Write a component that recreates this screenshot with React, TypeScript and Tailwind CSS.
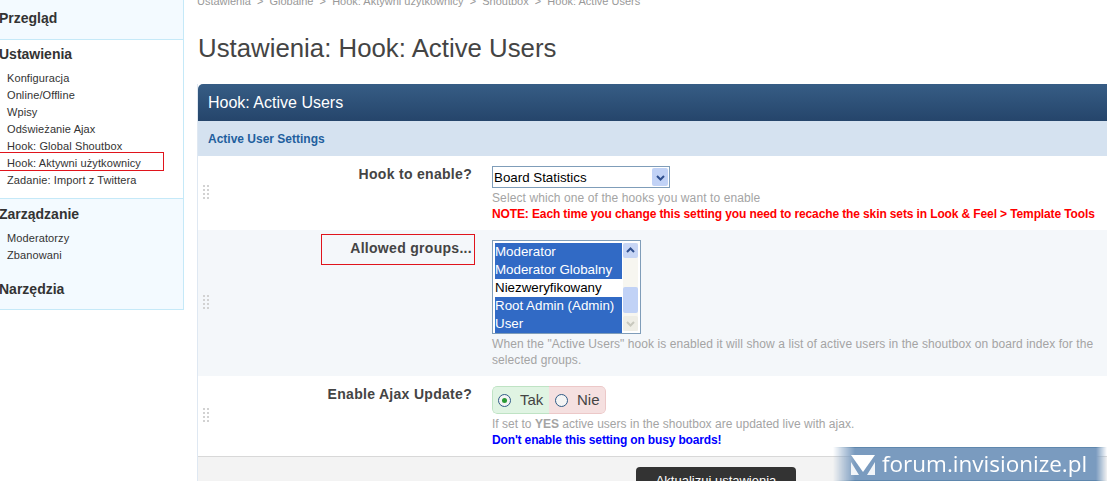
import React from 'react';

const sans = 'font-["Liberation_Sans",Arial,sans-serif]';

const DragHandle = () => (
    <svg width="6" height="14" viewBox="0 0 6 14" className="-mt-[2px] shrink-0" aria-hidden="true">
        {[0, 4, 8, 12].map((y) => (
            <g key={y} fill="#d2d2d2">
                <rect x="0" y={y} width="2" height="2" />
                <rect x="4" y={y} width="2" height="2" />
            </g>
        ))}
    </svg>
);

const NavItem: React.FC<{ label: string; marked?: boolean }> = ({ label, marked }) => (
    <li className="relative h-[17px] pl-[7px] text-[11px] leading-[17px] tracking-[0.1px] text-[#333]">
        {label}
        {marked && <span className="absolute -left-1 right-[19px] -top-[3px] h-[19px] border border-[#e0141c]" />}
    </li>
);

const SectionTitle: React.FC<{ children: React.ReactNode }> = ({ children }) => (
    <h3 className="-ml-px text-[14px] font-bold leading-[18px] text-[#333]">{children}</h3>
);

const Sidebar = () => (
    <aside className="h-[310px] w-[184px] shrink-0 border-r border-b border-[#c5e9f8]">
        <div className="h-[40px] border-b border-[#c5e9f8] bg-[#f3faff] pt-[9px]">
            <SectionTitle>Przegląd</SectionTitle>
        </div>
        <div className="h-[158px] bg-white pt-[5px]">
            <SectionTitle>Ustawienia</SectionTitle>
            <ul className="mt-[7px]">
                <NavItem label="Konfiguracja" />
                <NavItem label="Online/Offline" />
                <NavItem label="Wpisy" />
                <NavItem label="Odświeżanie Ajax" />
                <NavItem label="Hook: Global Shoutbox" />
                <NavItem label="Hook: Aktywni użytkownicy" marked />
                <NavItem label="Zadanie: Import z Twittera" />
            </ul>
        </div>
        <div className="h-[111px] border-t border-[#c5e9f8] bg-[#f3faff] pt-[6px]">
            <SectionTitle>Zarządzanie</SectionTitle>
            <ul className="mt-[7px]">
                <NavItem label="Moderatorzy" />
                <NavItem label="Zbanowani" />
            </ul>
            <div className="mt-[16px]">
                <SectionTitle>Narzędzia</SectionTitle>
            </div>
        </div>
    </aside>
);

const SettingRow: React.FC<{ label: string; bg: string; height: string; children: React.ReactNode; marked?: boolean }> = ({
    label,
    bg,
    height,
    children,
    marked,
}) => (
    <div className={`flex ${bg} ${height}`}>
        <div className="flex w-[16px] shrink-0 items-center pl-[5px]">
            <DragHandle />
        </div>
        <div className="w-[258px] shrink-0 pt-[6px] text-right">
            <span className="relative inline-block text-[14px] font-bold leading-[16px] tracking-[0.3px] text-[#444]">
                {label}
                {marked && <span className="absolute right-[-3px] -top-[6px] h-[31px] w-[154px] border border-[#e0141c]" />}
            </span>
        </div>
        <div className="ml-[20px] w-[612px]">{children}</div>
    </div>
);

const ListOption: React.FC<{ label: string; selected?: boolean }> = ({ label, selected }) => (
    <div className={`h-[18px] text-[13.33px] leading-[18px] ${selected ? 'bg-[#316ac5] text-white' : 'bg-white text-black'}`}>
        {label}
    </div>
);

const Radio: React.FC<{ checked?: boolean }> = ({ checked }) => (
    <span className="flex h-[13px] w-[13px] shrink-0 items-center justify-center rounded-full border border-[#2f5a85] bg-[#f4f4f4]">
        {checked && <span className="h-[5px] w-[5px] rounded-full bg-[#2a9a35]" />}
    </span>
);

const Chevron: React.FC<{ up?: boolean; color?: string }> = ({ up, color = '#2f4f8f' }) => (
    <svg width="9" height="7" viewBox="0 0 9 7" aria-hidden="true">
        <path d={up ? 'M1 5l3.5-3.5L8 5' : 'M1 2l3.5 3.5L8 2'} fill="none" stroke={color} strokeWidth="2" />
    </svg>
);

const Watermark = () => (
    <div className="absolute bottom-0 right-0 flex h-[34px] w-[274px] items-center border-y border-[#5f87ad] bg-[#7a9bbf] pl-[18px] [mask-image:linear-gradient(90deg,transparent_0%,black_8%,black_96%,transparent_100%)]">
        <svg width="24" height="20" viewBox="0 0 24 20" className="mt-[2px] shrink-0" aria-hidden="true">
            <path d="M0 0h24L12 17z" fill="#fff" />
            <path d="M0 7l8 13H0zM24 7v13h-8z" fill="#fff" opacity="0.9" />
        </svg>
        <span className='ml-[7px] font-["Open_Sans",sans-serif] text-[22.5px] leading-[30px] text-white'>forum.invisionize.pl</span>
    </div>
);

export default function App() {
    return (
        <div className={`relative h-[481px] w-[1107px] overflow-hidden bg-white ${sans}`}>
            <div className="flex">
                <Sidebar />
                <main className="ml-[13px] w-[940px] shrink-0">
                    <div className="-mt-[6px] h-[14px] whitespace-pre text-[11px] leading-[14px] text-[#999]">
                        {'Ustawienia  >  Globalne  >  Hook: Aktywni użytkownicy  >  Shoutbox  >  Hook: Active Users'}
                    </div>
                    <h1 className="ml-px mt-[22px] text-[25.8px] font-normal leading-[36px] text-[#444]">Ustawienia: Hook: Active Users</h1>
                    <section className="mt-[18px] border-l border-[#dfe8f2]">
                        <div className="h-[37px] rounded-tl-[5px] bg-gradient-to-b from-[#375d85] to-[#25456b] pl-[10px] text-[16px] leading-[37px] text-white">
                            Hook: Active Users
                        </div>
                        <div className="h-[35px] bg-[#d5e2f0] pl-[10px] text-[12px] font-bold leading-[36px] text-[#1f5f9e]">Active User Settings</div>

                        <SettingRow label="Hook to enable?" bg="bg-white" height="h-[74px]">
                            <div className="mt-[10px] flex h-[22px] w-[178px] items-center justify-between border border-[#7f9db9] bg-white pl-px pr-px text-[13.33px] leading-[20px] text-black">
                                <span className="pt-px">Board Statistics</span>
                                <span className="flex h-[18px] w-[16px] items-center justify-center rounded-[2px] bg-[#c1d2f6]">
                                    <Chevron />
                                </span>
                            </div>
                            <p className="mt-[2px] text-[12px] leading-[16px] tracking-[0.1px] text-[#a4a4a4]">Select which one of the hooks you want to enable</p>
                            <p className="whitespace-nowrap text-[12px] font-bold leading-[16px] tracking-[-0.12px] text-[#f00]">
                                NOTE: Each time you change this setting you need to recache the skin sets in Look &amp; Feel &gt; Template Tools
                            </p>
                        </SettingRow>

                        <SettingRow label="Allowed groups..." bg="bg-[#f4f7fa]" height="h-[146px]" marked>
                            <div className="mt-[10px] flex h-[94px] w-[149px] border border-[#7f9db9] bg-white p-[2px]">
                                <div className="w-[128px]">
                                    <ListOption label="Moderator" selected />
                                    <ListOption label="Moderator Globalny" selected />
                                    <ListOption label="Niezweryfikowany" />
                                    <ListOption label="Root Admin (Admin)" selected />
                                    <ListOption label="User" selected />
                                </div>
                                <div className="ml-px flex w-[15px] flex-col bg-[#f7f6f0]">
                                    <span className="flex h-[15px] items-center justify-center rounded-[2px] bg-[#c8d6f5]">
                                        <Chevron up />
                                    </span>
                                    <span className="mt-[29px] h-[26px] rounded-[2px] bg-[#c1d2f6]" />
                                    <span className="mt-auto flex h-[15px] items-center justify-center rounded-[2px] bg-[#eeede5]">
                                        <Chevron color="#c8c8bd" />
                                    </span>
                                </div>
                            </div>
                            <p className="mt-[2px] text-[12px] leading-[16px] tracking-[0.08px] text-[#a4a4a4]">
                                When the "Active Users" hook is enabled it will show a list of active users in the shoutbox on board index for the selected groups.
                            </p>
                        </SettingRow>

                        <SettingRow label="Enable Ajax Update?" bg="bg-white" height="h-[80px]">
                            <div className="mt-[10px] flex h-[28px] w-[114px] overflow-hidden rounded-[5px] text-[15px] text-[#444]">
                                <div className="flex w-[57px] items-center gap-[9px] rounded-l-[5px] border border-r-0 border-[#bfe3c4] bg-[#e0f4e3] pl-[5px]">
                                    <Radio checked />
                                    Tak
                                </div>
                                <div className="flex w-[57px] items-center gap-[9px] rounded-r-[5px] border border-l-0 border-[#ecc8c8] bg-[#f5e0e0] pl-[6px]">
                                    <Radio />
                                    Nie
                                </div>
                            </div>
                            <p className="mt-[2px] text-[12px] leading-[16px] tracking-[0.02px] text-[#a4a4a4]">
                                If set to <strong>YES</strong> active users in the shoutbox are updated live with ajax.
                            </p>
                            <p className="text-[12px] font-bold leading-[16px] tracking-[-0.15px] text-[#00f]">Don't enable this setting on busy boards!</p>
                        </SettingRow>

                        <div className="h-[40px] border-t border-[#d8d8d8] bg-[#f3f3f3] pl-[438px] pt-[10px]">
                            <div className="h-[30px] w-[160px] rounded-t-[4px] bg-[#333] pt-[4px] text-center text-[13px] text-white">Aktualizuj ustawienia</div>
                        </div>
                    </section>
                </main>
            </div>
            <Watermark />
        </div>
    );
}
